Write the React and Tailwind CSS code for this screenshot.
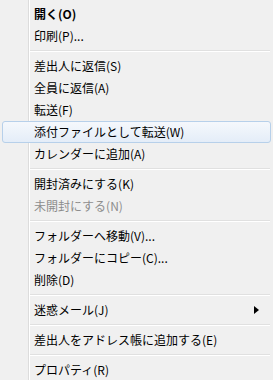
import React from 'react';

const items = [
  { label: '開く(O)', bold: true },
  { label: '印刷(P)...' },
  { sep: true },
  { label: '差出人に返信(S)' },
  { label: '全員に返信(A)' },
  { label: '転送(F)' },
  { label: '添付ファイルとして転送(W)', active: true },
  { label: 'カレンダーに追加(A)' },
  { sep: true },
  { label: '開封済みにする(K)' },
  { label: '未開封にする(N)', disabled: true },
  { sep: true },
  { label: 'フォルダーへ移動(V)...' },
  { label: 'フォルダーにコピー(C)...' },
  { label: '削除(D)' },
  { sep: true },
  { label: '迷惑メール(J)', submenu: true },
  { sep: true },
  { label: '差出人をアドレス帳に追加する(E)' },
  { sep: true },
  { label: 'プロパティ(R)' },
];

const MenuRow = ({ item }) => {
  if (item.sep) {
    return (
      <div className="h-[8px] flex items-center pl-[30px] pr-[3px]">
        <div className="w-full h-[2px] border-t border-[#e0e0e0] border-b border-b-white" />
      </div>
    );
  }

  return (
    <div
      className={
        'h-[22px] mx-[2px] flex items-center justify-between pl-[31px] pr-[10px] rounded-[3px] border ' +
        (item.active
          ? 'border-[#b7d0ea] bg-[image:linear-gradient(to_bottom,#f5f8fc,#e4edf8)]'
          : 'border-transparent')
      }
    >
      <span
        className={
          (item.bold ? 'font-bold ' : '') +
          (item.disabled ? 'text-[#8d8d8d]' : 'text-black')
        }
      >
        {item.label}
      </span>
      {item.submenu && (
        <svg width="5" height="8" viewBox="0 0 5 8" className="mr-[1px]">
          <path d="M0 0 L5 4 L0 8 Z" fill="#000" />
        </svg>
      )}
    </div>
  );
};

export default function App() {
  return (
    <div
      className="w-[273px] h-[380px] overflow-hidden pt-[3px] bg-[#f0f0f0] bg-[image:linear-gradient(to_right,transparent_28px,#dcdcdc_28px,#dcdcdc_29px,#ffffff_29px,#ffffff_30px,transparent_30px)] text-[12px] leading-none"
      style={{ fontFamily: '"Noto Sans CJK JP", "Noto Sans", sans-serif' }}
    >
      {items.map((item, i) => (
        <MenuRow key={i} item={item} />
      ))}
    </div>
  );
}
